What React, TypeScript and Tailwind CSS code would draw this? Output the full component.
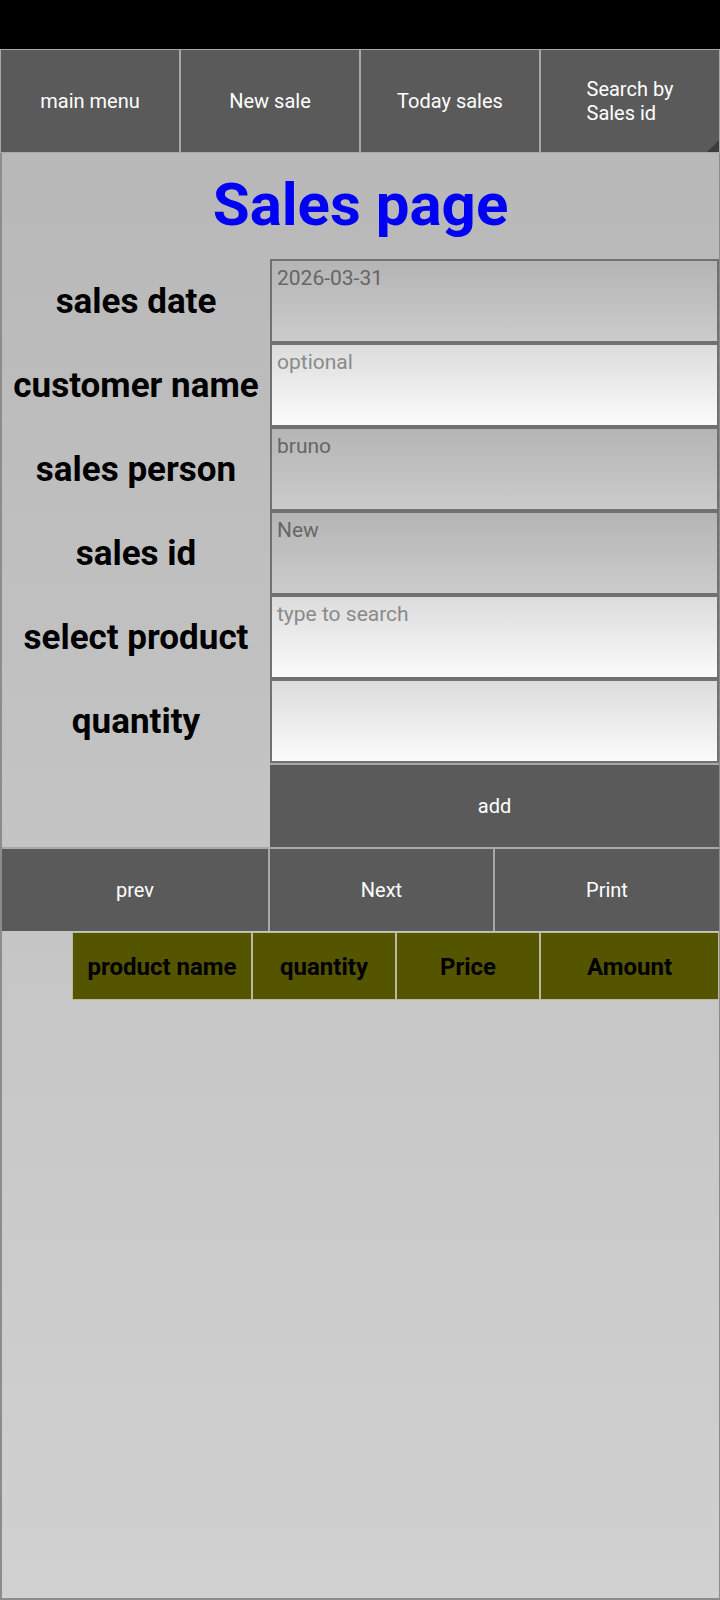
import React from "react";

const font = { fontFamily: "Roboto, 'Liberation Sans', sans-serif" };

function NavBtn({ children, corner }: { children: React.ReactNode; corner?: boolean }) {
  return (
    <div className="relative flex-1 flex items-center justify-center bg-[#5a5a5a] border border-[#a8a8a8] text-white text-[20px] leading-[24px]">
      {children}
      {corner && (
        <div className="absolute right-0 bottom-0 w-0 h-0 border-l-[12px] border-l-transparent border-b-[12px] border-b-[#3c3c3c]" />
      )}
    </div>
  );
}

function Row({ label, value, placeholder, disabled }: { label: string; value?: string; placeholder?: string; disabled?: boolean }) {
  return (
    <>
      <div className="h-[84px] flex items-center justify-center text-black font-bold text-[35px] leading-none">
        {label}
      </div>
      <div
        className={
          "h-[84px] border-2 border-[#717171] px-[5px] pt-[3px] text-[21px] leading-[28px] " +
          (disabled
            ? "bg-gradient-to-b from-[#b5b5b5] to-[#cbcbcb] text-[#666666]"
            : "bg-gradient-to-b from-[#dcdcdc] to-[#fbfbfb] text-[#8a8a8a]")
        }
      >
        {value ?? placeholder ?? ""}
      </div>
    </>
  );
}

export default function App() {
  return (
    <div className="w-[720px] h-[1600px] bg-black flex flex-col pt-[49px]" style={font}>
      <div className="flex h-[104px]">
        <NavBtn>main menu</NavBtn>
        <NavBtn>New sale</NavBtn>
        <NavBtn>Today sales</NavBtn>
        <NavBtn corner>
          <span className="text-left">
            Search by
            <br />
            Sales id
          </span>
        </NavBtn>
      </div>
      <div className="flex-1 flex flex-col border-l-2 border-b-2 border-r border-[#8c8c8c] bg-gradient-to-b from-[#b8b8b8] to-[#d1d1d1]">
        <div className="h-[106px] flex items-center justify-center text-[#0000f5] font-bold text-[60px] leading-none pb-[2px]">
          Sales page
        </div>
        <div className="grid grid-cols-[268px_1fr]">
          <Row label="sales date" value="2026-03-31" disabled />
          <Row label="customer name" placeholder="optional" />
          <Row label="sales person" value="bruno" disabled />
          <Row label="sales id" value="New" disabled />
          <Row label="select product" placeholder="type to search" />
          <Row label="quantity" />
          <div className="h-[84px]" />
          <div className="h-[84px] bg-[#5a5a5a] border-t-2 border-[#a8a8a8] flex items-center justify-center text-white text-[20px]">
            add
          </div>
        </div>
        <div className="flex h-[84px] border-t-2 border-[#a8a8a8] bg-[#5a5a5a] text-white text-[20px]">
          <div className="w-[268px] flex items-center justify-center border-r-2 border-[#a8a8a8]">prev</div>
          <div className="w-[225px] flex items-center justify-center border-r-2 border-[#a8a8a8]">Next</div>
          <div className="flex-1 flex items-center justify-center">Print</div>
        </div>
        <div className="flex pl-[70px] pt-[1px]">
          {[
            ["product name", "w-[180px]"],
            ["quantity", "w-[144px]"],
            ["Price", "w-[144px]"],
            ["Amount", "flex-1"],
          ].map(([t, w]) => (
            <div
              key={t}
              className={
                w +
                " h-[68px] bg-[#555500] border border-[#b9b9a0] flex items-center justify-center text-black font-bold text-[24px] pt-[2px]"
              }
            >
              {t}
            </div>
          ))}
        </div>
      </div>
    </div>
  );
}
